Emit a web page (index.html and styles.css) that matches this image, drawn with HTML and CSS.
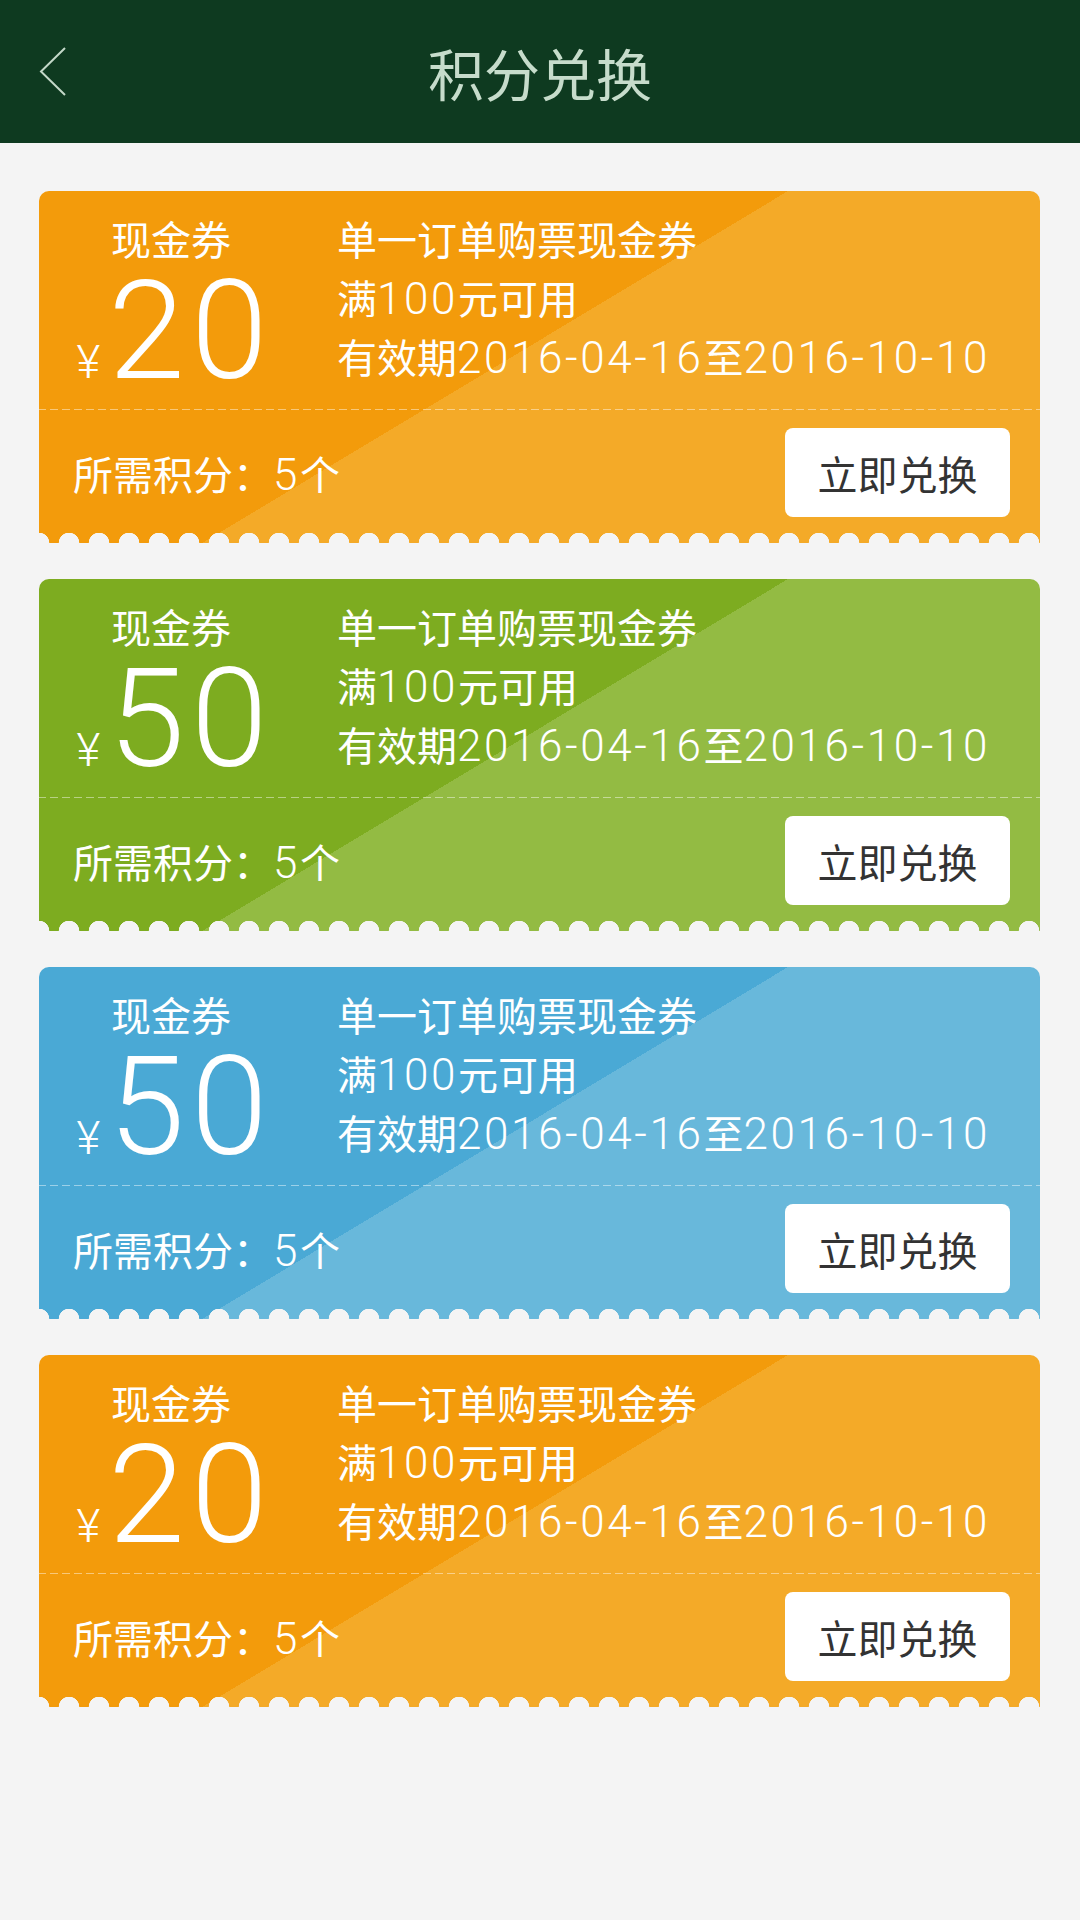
FILE: index.html
```html
<!DOCTYPE html>
<html lang="zh-CN">
<head>
    <meta charset="UTF-8">
    <meta name="viewport" content="width=device-width, initial-scale=1.0">
    <title>积分兑换</title>
    <link rel="stylesheet" href="styles.css">
</head>
<body>
    <header class="topbar">
        <a class="back" href="#">
            <svg width="28" height="50" viewBox="0 0 28 50">
                <polyline points="26,1 2,24.5 26,48" fill="none" stroke="#c3d8c8" stroke-width="2"/>
            </svg>
        </a>
        <h1>积分兑换</h1>
        <span></span>
    </header>

    <main class="coupon-list">
        <div class="coupon coupon-orange">
            <div class="coupon-main">
                <div class="coupon-value">
                    <div class="coupon-type">现金券</div>
                    <div class="coupon-amount"><span class="yen">¥</span>20</div>
                </div>
                <div class="coupon-info">
                    <p>单一订单购票现金券</p>
                    <p>满<span class="num">100</span>元可用</p>
                    <p>有效期<span class="num">2016-04-16</span>至<span class="num">2016-10-10</span></p>
                </div>
            </div>
            <div class="coupon-foot">
                <span class="cost">所需积分：<span class="num">5</span>个</span>
                <button class="redeem">立即兑换</button>
            </div>
        </div>

        <div class="coupon coupon-green">
            <div class="coupon-main">
                <div class="coupon-value">
                    <div class="coupon-type">现金券</div>
                    <div class="coupon-amount"><span class="yen">¥</span>50</div>
                </div>
                <div class="coupon-info">
                    <p>单一订单购票现金券</p>
                    <p>满<span class="num">100</span>元可用</p>
                    <p>有效期<span class="num">2016-04-16</span>至<span class="num">2016-10-10</span></p>
                </div>
            </div>
            <div class="coupon-foot">
                <span class="cost">所需积分：<span class="num">5</span>个</span>
                <button class="redeem">立即兑换</button>
            </div>
        </div>

        <div class="coupon coupon-blue">
            <div class="coupon-main">
                <div class="coupon-value">
                    <div class="coupon-type">现金券</div>
                    <div class="coupon-amount"><span class="yen">¥</span>50</div>
                </div>
                <div class="coupon-info">
                    <p>单一订单购票现金券</p>
                    <p>满<span class="num">100</span>元可用</p>
                    <p>有效期<span class="num">2016-04-16</span>至<span class="num">2016-10-10</span></p>
                </div>
            </div>
            <div class="coupon-foot">
                <span class="cost">所需积分：<span class="num">5</span>个</span>
                <button class="redeem">立即兑换</button>
            </div>
        </div>

        <div class="coupon coupon-orange">
            <div class="coupon-main">
                <div class="coupon-value">
                    <div class="coupon-type">现金券</div>
                    <div class="coupon-amount"><span class="yen">¥</span>20</div>
                </div>
                <div class="coupon-info">
                    <p>单一订单购票现金券</p>
                    <p>满<span class="num">100</span>元可用</p>
                    <p>有效期<span class="num">2016-04-16</span>至<span class="num">2016-10-10</span></p>
                </div>
            </div>
            <div class="coupon-foot">
                <span class="cost">所需积分：<span class="num">5</span>个</span>
                <button class="redeem">立即兑换</button>
            </div>
        </div>
    </main>
</body>
</html>
```

FILE: styles.css
```css
html {
    background-color: #f4f4f4;
}
body {
    margin: 0;
    font-family: "Noto Sans CJK SC", sans-serif;
    color: #fff;
    background-color: #f4f4f4;
}
.topbar {
    height: 143px;
    background-color: #0e3a20;
    display: grid;
    grid-template-columns: 1fr auto 1fr;
    align-items: center;
}
.back {
    display: flex;
    padding-left: 39px;
}
.topbar h1 {
    margin: 0;
    font-size: 56px;
    font-weight: normal;
    color: #c6dccb;
}
.coupon-list {
    padding: 48px 0 0 39px;
    display: flex;
    flex-direction: column;
    gap: 36px;
}
.coupon {
    position: relative;
    width: 1001px;
    height: 352px;
    border-radius: 10px 10px 0 0;
    display: flex;
    flex-direction: column;
}
/* scalloped bottom edge */
.coupon::after {
    content: "";
    position: absolute;
    left: 0;
    right: 0;
    bottom: 0;
    height: 10px;
    background-image: radial-gradient(circle at 15px 10px, #f4f4f4 10px, transparent 10.6px);
    background-size: 30px 10px;
    background-position: -15px 0;
}
.coupon-orange {
    background: linear-gradient(149deg, #f39b0b 47.2%, #f4aa28 47.2%);
}
.coupon-green {
    background: linear-gradient(149deg, #7dac20 47.2%, #93bb43 47.2%);
}
.coupon-blue {
    background: linear-gradient(149deg, #4aa9d5 47.2%, #68b8db 47.2%);
}
.coupon-main {
    height: 218px;
    display: flex;
    border-bottom: 1px solid transparent;
    border-image: repeating-linear-gradient(to right, rgba(255, 255, 255, 0.45) 0 8px, transparent 8px 12px) 1;
}
.coupon-value {
    width: 264px;
    padding-top: 23px;
    text-align: center;
}
.coupon-type {
    font-size: 40px;
    line-height: 48px;
}
.coupon-amount {
    padding-left: 8px;
    font-family: Roboto, sans-serif;
    font-weight: 300;
    font-size: 138px;
    line-height: 138px;
    letter-spacing: 6px;
}
.yen {
    font-size: 46px;
    letter-spacing: 0;
    margin-right: 8px;
}
.coupon-info {
    padding: 18px 0 0 34px;
    font-size: 40px;
    line-height: 59px;
}
.coupon-info p {
    margin: 0;
}
.num {
    font-family: Roboto, sans-serif;
    font-weight: 300;
    font-size: 44px;
    line-height: 1;
    letter-spacing: 2.6px;
}
.coupon-foot {
    flex: 1;
    display: flex;
    align-items: center;
    justify-content: space-between;
    padding: 0 30px 8px 34px;
}
.cost {
    font-size: 40px;
}
.redeem {
    width: 225px;
    height: 89px;
    padding: 0;
    border: none;
    border-radius: 8px;
    background-color: #fff;
    color: #333;
    font-family: "Noto Sans CJK SC", sans-serif;
    font-size: 40px;
    cursor: pointer;
}
```
